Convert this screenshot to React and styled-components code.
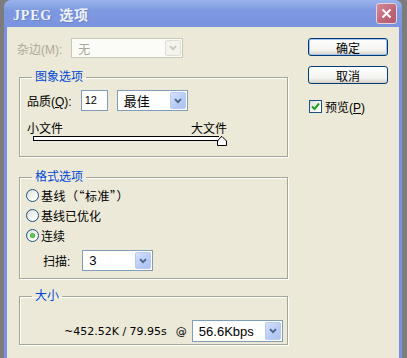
import React from 'react';
import styled, { createGlobalStyle } from 'styled-components';

const GlobalStyle = createGlobalStyle`
  html, body {
    margin: 0;
    padding: 0;
    background: #7c7c7c;
    overflow: hidden;
  }
  body {
    font-family: "Liberation Sans", "Noto Sans CJK SC", sans-serif;
    font-size: 12px;
    color: #000;
  }
`;

const Page = styled.div`
  width: 407px;
  height: 358px;
  display: flex;
  padding-left: 4px;
  box-sizing: border-box;
`;

const Window = styled.div`
  width: 398px;
  height: 370px;
  display: flex;
  flex-direction: column;
  border-radius: 7px 7px 0 0;
  background: #7a8fde;
  padding: 0 3px;
  box-sizing: border-box;
`;

const TitleBar = styled.div`
  height: 27px;
  display: flex;
  align-items: center;
  justify-content: space-between;
  background: linear-gradient(#9bb4ec, #7d98e0 40%, #7a94df);
  margin: 0 -3px;
  padding-left: 9px;
  padding-right: 5px;
  border-radius: 7px 7px 0 0;
`;

const Title = styled.span`
  color: #eef2fc;
  font-family: "Liberation Serif", "Noto Sans CJK SC", serif;
  font-weight: bold;
  font-size: 14px;
  letter-spacing: 0.8px;
  word-spacing: 3px;
  text-shadow: 1px 1px 0 #6a82c8;
`;

const CloseButton = styled.div`
  width: 21px;
  height: 21px;
  box-sizing: border-box;
  border: 1px solid #e8d4dc;
  border-radius: 3px;
  background: linear-gradient(135deg, #d58a98, #bd6677 60%, #b15a6c);
  display: flex;
  align-items: center;
  justify-content: center;
`;

const Body = styled.div`
  flex: 1;
  background: #ece9d8;
  display: flex;
  padding: 11px 0 0 12px;
`;

const Main = styled.div`
  width: 269px;
  display: flex;
  flex-direction: column;
`;

const Side = styled.div`
  margin-left: 20px;
  width: 80px;
  display: flex;
  flex-direction: column;
`;

const MatteRow = styled.div`
  display: flex;
  align-items: center;
  height: 20px;
  margin-left: -2px;
  gap: 9px;
  color: #aca899;
`;

const Group = styled.fieldset`
  margin: 0;
  margin-top: ${(p) => p.$top}px;
  height: ${(p) => p.$height}px;
  box-sizing: border-box;
  border: 1px solid #a5a597;
  box-shadow: inset 1px 1px 0 #fff, 1px 1px 0 #fff;
  border-radius: 0;
  padding: 0;
`;

const Legend = styled.legend`
  color: #0046d5;
  padding: 0 3px;
  margin-left: 12px;
  line-height: 16px;
`;

const GroupBody = styled.div`
  display: flex;
  flex-direction: column;
  padding: ${(p) => p.$pad};
`;

const Row = styled.div`
  display: flex;
  align-items: center;
  gap: ${(p) => p.$gap || 0}px;
  height: ${(p) => p.$height || 20}px;
  padding-left: ${(p) => p.$indent || 0}px;
  margin-top: ${(p) => p.$top || 0}px;
`;

const TextBox = styled.div`
  width: 27px;
  height: 21px;
  box-sizing: border-box;
  border: 1px solid #7f9db9;
  background: #fff;
  padding: 2px 3px;
  font-size: 11px;
  line-height: 15px;
`;

const SelectBox = styled.div`
  width: ${(p) => p.$width}px;
  height: ${(p) => p.$height || 21}px;
  box-sizing: border-box;
  border: 1px solid ${(p) => (p.$disabled ? '#c9c7ba' : '#7f9db9')};
  background: ${(p) => (p.$disabled ? '#fbfbf8' : '#fff')};
  color: ${(p) => (p.$disabled ? '#aca899' : '#000')};
  display: flex;
  align-items: center;
  justify-content: space-between;
  padding: 1px 1px 1px 6px;
`;

const ArrowButton = styled.div`
  width: 16px;
  height: 100%;
  box-sizing: border-box;
  border: 1px solid ${(p) => (p.$disabled ? '#e0ded6' : '#bac9ef')};
  border-radius: 2px;
  background: ${(p) =>
    p.$disabled ? '#f4f3ee' : 'linear-gradient(135deg, #d6e2fd, #b7cbf7 60%, #aec3f3)'};
  display: flex;
  align-items: center;
  justify-content: center;
`;

const Select = ({ value, width, height, disabled, small }) => (
  <SelectBox $width={width} $height={height} $disabled={disabled}>
    <span style={{ fontSize: small ? 12 : 13 }}>{value}</span>
    <ArrowButton $disabled={disabled}>
      <svg width="8" height="6" viewBox="0 0 8 6">
        <path
          d="M1 1.2 L4 4.2 L7 1.2"
          fill="none"
          stroke={disabled ? '#c9c7ba' : '#4d6185'}
          strokeWidth="1.8"
        />
      </svg>
    </ArrowButton>
  </SelectBox>
);

const Labels = styled.div`
  display: flex;
  justify-content: space-between;
  width: 200px;
  margin-top: 10px;
  line-height: 16px;
`;

const Track = styled.div`
  width: 192px;
  height: 10px;
  margin-left: 6px;
  margin-top: -1px;
  display: flex;
  align-items: flex-start;
  position: relative;
`;

const TrackLine = styled.div`
  width: 186px;
  height: 5px;
  box-sizing: border-box;
  border: 1px solid #000;
  background: #fff;
  border-right: none;
`;

const Thumb = styled.svg`
  position: absolute;
  left: 184px;
  top: 0;
`;

const RadioRow = styled.label`
  display: flex;
  align-items: center;
  gap: 2px;
  height: 20px;
  margin-left: -1px;
`;

const RadioCircle = styled.span`
  width: 13px;
  height: 13px;
  box-sizing: border-box;
  border-radius: 50%;
  border: 1px solid #1c5180;
  background: linear-gradient(135deg, #dcdcd5, #fff 80%);
  display: flex;
  align-items: center;
  justify-content: center;
  &::after {
    content: '';
    display: ${(p) => (p.$checked ? 'block' : 'none')};
    width: 5px;
    height: 5px;
    border-radius: 50%;
    background: radial-gradient(#6ed65f, #21a121);
  }
`;

const CjkText = styled.span`
  font-family: "Noto Sans CJK SC", sans-serif;
  letter-spacing: 0.5px;
`;

const Button = styled.div`
  height: 18px;
  box-sizing: border-box;
  border: 1px solid #003c74;
  border-radius: 3px;
  background: linear-gradient(#fff, #f3f3ef 70%, #d6d0c5);
  box-shadow: ${(p) => (p.$default ? 'inset 0 0 0 1px #a6c2f3' : 'none')};
  display: flex;
  align-items: center;
  justify-content: center;
  margin-bottom: 10px;
  font-size: 12px;
`;

const CheckRow = styled.label`
  display: flex;
  align-items: center;
  gap: 3px;
  margin-top: 4px;
  margin-left: 1px;
`;

const CheckBox = styled.span`
  width: 13px;
  height: 13px;
  box-sizing: border-box;
  border: 1px solid #1c5180;
  background: linear-gradient(135deg, #dcdcd5, #fff 80%);
  display: flex;
  align-items: center;
  justify-content: center;
`;

const SizeText = styled.span`
  font-family: "DejaVu Sans", sans-serif;
  font-size: 11px;
  margin-right: ${(p) => p.$gap}px;
`;

export default function App() {
  return (
    <Page>
      <GlobalStyle />
      <Window>
        <TitleBar>
          <Title>JPEG 选项</Title>
          <CloseButton>
            <svg width="11" height="11" viewBox="0 0 11 11">
              <path d="M1.5 1.5 L9.5 9.5 M9.5 1.5 L1.5 9.5" stroke="#fff" strokeWidth="2" />
            </svg>
          </CloseButton>
        </TitleBar>
        <Body>
          <Main>
            <MatteRow>
              <span>杂边(M):</span>
              <Select value="无" width={112} height={20} disabled small />
            </MatteRow>
            <Group $top={11} $height={88}>
              <Legend>图象选项</Legend>
              <GroupBody $pad="5px 0 0 7px">
                <Row $gap={9} $height={21}>
                  <span>品质(<u>Q</u>):</span>
                  <TextBox>12</TextBox>
                  <Select value="最佳" width={71} />
                </Row>
                <Labels>
                  <span>小文件</span>
                  <span>大文件</span>
                </Labels>
                <Track>
                  <TrackLine />
                  <Thumb width="10" height="10" viewBox="0 0 10 10">
                    <path d="M0.5 5 L4 0.8 L5 0.5 L9.5 5 L9.5 9.5 L0.5 9.5 Z" fill="#fff" stroke="#000" />
                  </Thumb>
                </Track>
              </GroupBody>
            </Group>
            <Group $top={12} $height={110}>
              <Legend>格式选项</Legend>
              <GroupBody $pad="0 0 0 7px">
                <RadioRow>
                  <RadioCircle />
                  <CjkText>基线（“标准”）</CjkText>
                </RadioRow>
                <RadioRow>
                  <RadioCircle />
                  <span>基线已优化</span>
                </RadioRow>
                <RadioRow>
                  <RadioCircle $checked />
                  <span>连续</span>
                </RadioRow>
                <Row $gap={12} $height={21} $indent={16} $top={5}>
                  <span>扫描:</span>
                  <Select value="3" width={71} />
                </Row>
              </GroupBody>
            </Group>
            <Group $top={9} $height={57}>
              <Legend>大小</Legend>
              <GroupBody $pad="16px 0 0 44px">
                <Row $height={22}>
                  <SizeText $gap={9}>~452.52K / 79.95s</SizeText>
                  <SizeText $gap={5}>@</SizeText>
                  <Select value="56.6Kbps" width={91} height={22} />
                </Row>
              </GroupBody>
            </Group>
          </Main>
          <Side>
            <Button $default>确定</Button>
            <Button>取消</Button>
            <CheckRow>
              <CheckBox>
                <svg width="9" height="9" viewBox="0 0 9 9">
                  <path d="M1 4.5 L3.5 7 L8 1.5" fill="none" stroke="#21a121" strokeWidth="2" />
                </svg>
              </CheckBox>
              <span>预览(<u>P</u>)</span>
            </CheckRow>
          </Side>
        </Body>
      </Window>
    </Page>
  );
}
